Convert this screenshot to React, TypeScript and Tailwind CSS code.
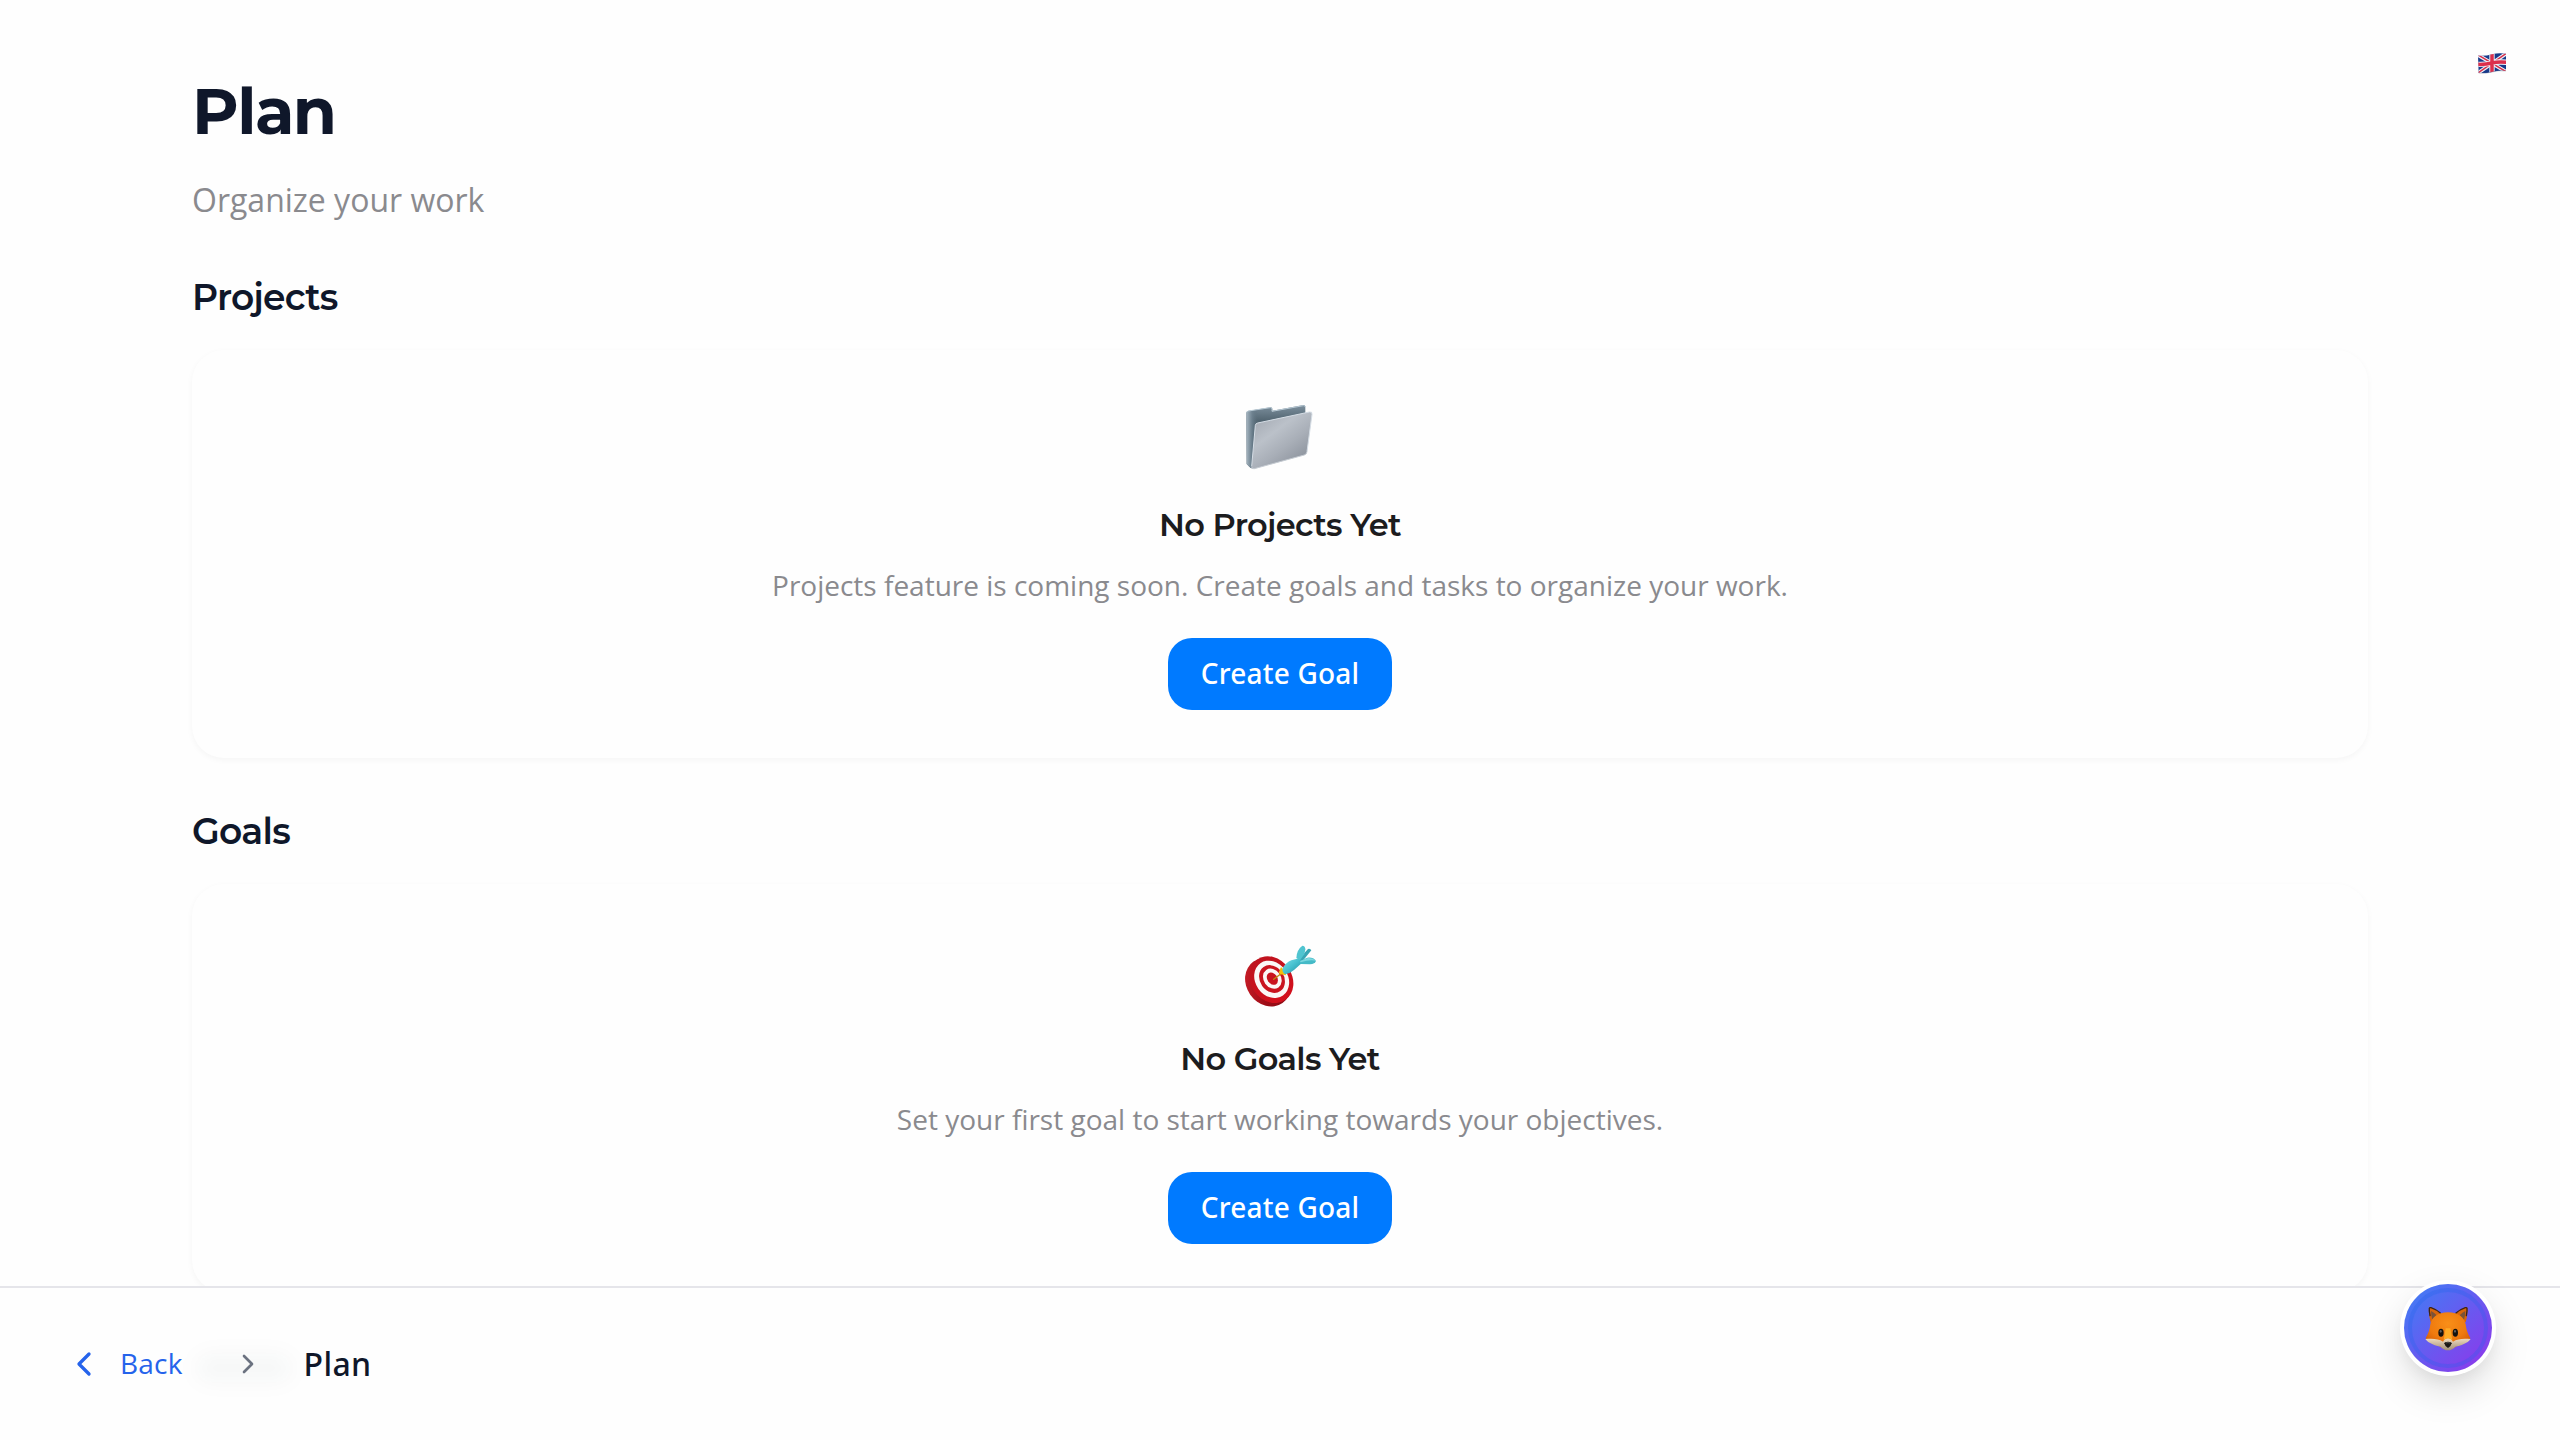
import React from "react";
import { ChevronLeft, ChevronRight } from "lucide-react";

function FolderIcon() {
  return (
    <svg viewBox="120 60 240 216" className="h-18 w-20 overflow-visible" aria-hidden="true">
      <defs>
        <linearGradient id="folderBack" x1="0" y1="0" x2="0" y2="1">
          <stop offset="0" stopColor="#7d909e" />
          <stop offset="0.25" stopColor="#526571" />
          <stop offset="1" stopColor="#42525f" />
        </linearGradient>
        <linearGradient id="folderSide" x1="0" y1="0" x2="1" y2="0">
          <stop offset="0" stopColor="#a9b8c3" />
          <stop offset="0.1" stopColor="#708492" stopOpacity="0.8" />
          <stop offset="0.2" stopColor="#5d717f" stopOpacity="0" />
        </linearGradient>
        <linearGradient id="folderFront" x1="0.1" y1="0" x2="0.9" y2="1">
          <stop offset="0" stopColor="#a1a7b0" />
          <stop offset="0.35" stopColor="#bbc1c9" />
          <stop offset="0.6" stopColor="#a8aeb7" />
          <stop offset="1" stopColor="#828993" />
        </linearGradient>
      </defs>
      <path d="M139 99q0-5 5-6l67-11q6-1 6 5v5l93-17q6-1 6 5v130l-157 54q-5 2-11-4l-8-8z" fill="url(#folderBack)" />
      <path d="M139 99q0-5 5-6l67-11q6-1 6 5v5l93-17q6-1 6 5v130l-157 54q-5 2-11-4l-8-8z" fill="url(#folderSide)" />
      <path d="M141 97q1-3 4-4l66-10q5-1 5 5v6l94-17q5-1 6 4" fill="none" stroke="#b9cad5" strokeWidth="3" />
      <path d="M166 136q1-6 7-7l155-33q9-2 8 7l-15 112q-1 8-8 10l-150 41q-9 2-8-6z" fill="url(#folderFront)" />
      <path d="M155 259l11-123q1-6 7-7l155-33q9-2 8 7l-15 112" fill="none" stroke="#d5dde5" strokeWidth="3" />
      <path d="M321 215q-1 8-8 10l-150 41q-8 2-8-6" fill="none" stroke="#c5cbd2" strokeWidth="3" />
    </svg>
  );
}

function TargetIcon() {
  return (
    <svg viewBox="60 12 240 216" className="h-18 w-20 overflow-visible" aria-hidden="true">
      <defs>
        <linearGradient id="targetRim" x1="0" y1="0" x2="1" y2="1">
          <stop offset="0" stopColor="#d3212b" />
          <stop offset="0.5" stopColor="#9e0d17" />
          <stop offset="1" stopColor="#7c0a12" />
        </linearGradient>
        <linearGradient id="targetFace" x1="0" y1="0" x2="0" y2="1">
          <stop offset="0" stopColor="#bf131e" />
          <stop offset="1" stopColor="#d3101c" />
        </linearGradient>
        <linearGradient id="dartBody" x1="0" y1="0" x2="1" y2="1">
          <stop offset="0" stopColor="#7fe0e8" />
          <stop offset="0.5" stopColor="#45bfce" />
          <stop offset="1" stopColor="#258b9c" />
        </linearGradient>
      </defs>
      <ellipse cx="144" cy="157" rx="65" ry="76" transform="rotate(-35 144 157)" fill="url(#targetRim)" />
      <ellipse cx="154" cy="149" rx="62" ry="74" transform="rotate(-35 154 149)" fill="url(#targetFace)" />
      <ellipse cx="155" cy="148" rx="49" ry="59" transform="rotate(-35 155 148)" fill="#fbf7f6" />
      <ellipse cx="156" cy="147" rx="36" ry="44" transform="rotate(-35 156 147)" fill="#c9141f" />
      <ellipse cx="157" cy="146" rx="26" ry="32" transform="rotate(-35 157 146)" fill="#fbf7f6" />
      <ellipse cx="157" cy="146" rx="15" ry="20" transform="rotate(-35 157 146)" fill="#c9141f" />
      <path d="M161 148l26-20" stroke="#c08a12" strokeWidth="4" strokeLinecap="round" />
      <path d="M183 111l16 17-2 8-15-3-6-5z" fill="#f2bd0c" />
      <path d="M188 115q10-18 26-24l24-6q10 6 5 16l-20 18q-12 11-28 14-10-7-7-18z" fill="url(#dartBody)" />
      <path d="M236 88l28-31q7-2 10 4l-28 34z" fill="#37a5b4" />
      <path d="M229 84q1-25 18-37 9 1 9 11l-3 15-13 18z" fill="#4fc4d0" />
      <path d="M238 94l24-11q18-2 26 10-3 9-18 10l-28-1z" fill="#45bac7" />
      <path d="M240 93l24-9q15-1 23 8-18-4-45 5z" fill="#7bd8df" />
    </svg>
  );
}

function FlagIcon() {
  return (
    <svg viewBox="0 0 84 63" className="h-[21px] w-7 overflow-visible" aria-label="English">
      <defs>
        <clipPath id="flagShape">
          <path d="M0 8Q22 10 42 4T84 2V54Q62 52 42 57T2 60Z" />
        </clipPath>
      </defs>
      <g clipPath="url(#flagShape)">
        <path d="M0 0h84v63H0z" fill="#173a8a" />
        <path d="M0 6L84 56M84 2L0 60" stroke="#eef1f8" strokeWidth="11" />
        <path d="M0 6L84 56M84 2L0 60" stroke="#d6304a" strokeWidth="4.5" />
        <path d="M42 0v63M0 34Q22 35 42 30T86 28" fill="none" stroke="#eef1f8" strokeWidth="16" />
        <path d="M42 0v63M0 34Q22 35 42 30T86 28" fill="none" stroke="#dc2f4c" strokeWidth="10.5" />
      </g>
      <path d="M2 60Q22 63 42 57T84 54" fill="none" stroke="#6f7690" strokeOpacity="0.5" strokeWidth="2" />
    </svg>
  );
}

function FoxIcon() {
  return (
    <svg viewBox="192 162 144 138" className="h-[46px] w-12" aria-hidden="true">
      <defs>
        <radialGradient id="foxHead" cx="0.5" cy="0.3" r="0.7">
          <stop offset="0" stopColor="#f98f18" />
          <stop offset="0.6" stopColor="#ef7a0e" />
          <stop offset="1" stopColor="#cf5806" />
        </radialGradient>
        <linearGradient id="foxMuzzle" x1="0" y1="0" x2="0" y2="1">
          <stop offset="0" stopColor="#f0dcc0" />
          <stop offset="1" stopColor="#a08e78" />
        </linearGradient>
      </defs>
      <path d="M212 214q-7-26-5-43 1-4 6-2 19 7 32 21l-14 22z" fill="#d9650a" />
      <path d="M317 214q7-26 5-43-1-4-6-2-19 7-32 21l14 22z" fill="#d9650a" />
      <path d="M210 194q-3-15-2-22 1-3 5-2 17 6 28 16" fill="none" stroke="#3a2418" strokeWidth="4" strokeLinecap="round" />
      <path d="M319 194q3-15 2-22-1-3-5-2-17 6-28 16" fill="none" stroke="#3a2418" strokeWidth="4" strokeLinecap="round" />
      <path d="M217 207q-4-15-4-27 9 4 17 13zM312 207q4-15 4-27-9 4-17 13z" fill="#7a5238" />
      <path d="M264 184c31 0 49 16 53 36 2 17 6 28 14 41-8 14-30 21-45 26-6 5-13 9-22 9s-16-4-22-9c-15-5-37-12-45-26 8-13 12-24 14-41 4-20 22-36 53-36z" fill="url(#foxHead)" />
      <path d="M196 264c18-2 40-2 53 8 5-7 9-10 15-10s10 3 15 10c13-10 35-10 53-8-9 13-30 20-46 23-6 6-13 11-22 11s-16-5-22-11c-16-3-37-10-46-23z" fill="url(#foxMuzzle)" />
      <path d="M257 232h14l6 36q-6-6-13-6t-13 6z" fill="#ffab24" />
      <ellipse cx="243" cy="245" rx="8" ry="12" fill="#16130f" />
      <ellipse cx="286" cy="245" rx="8" ry="12" fill="#16130f" />
      <ellipse cx="242" cy="241" rx="3" ry="4" fill="#5f6062" />
      <ellipse cx="285" cy="241" rx="3" ry="4" fill="#5f6062" />
      <path d="M253 277q0-5 11-5t11 5q-1 8-11 14-10-6-11-14z" fill="#1a1715" />
      <path d="M258 276q6-3 12 0" stroke="#6b6865" strokeWidth="2" fill="none" />
    </svg>
  );
}

type SectionProps = {
  heading: string;
  icon: React.ReactNode;
  title: string;
  description: string;
};

function Section({ heading, icon, title, description }: SectionProps) {
  return (
    <section>
      <h2 className="font-['Montserrat','Inter',sans-serif] text-4xl leading-[44px] font-semibold tracking-[-0.02em] text-[#0f172a]">
        {heading}
      </h2>
      <div className="mt-[31px] flex h-[408px] flex-col items-center rounded-[32px] bg-[#fefefe] pt-[50px] shadow-[0_2px_6px_rgba(0,0,0,0.04)]">
        {icon}
        <h3 className="mt-[33px] font-['Montserrat','Inter',sans-serif] text-[32px] leading-10 font-semibold tracking-[-0.02em] text-[#1c1c1e]">
          {title}
        </h3>
        <p className="mt-5 text-[28px] leading-10 text-[#8a8a8e]">{description}</p>
        <button className="mt-[33px] h-18 w-56 rounded-3xl bg-[#007aff] pb-0.5 font-['Noto_Sans',sans-serif] text-[28px] font-medium tracking-[0.2px] text-white">
          Create Goal
        </button>
      </div>
    </section>
  );
}

export default function App() {
  return (
    <div className="relative flex h-[1440px] w-[2560px] flex-col overflow-hidden bg-[#fefefe] font-['Open_Sans','Noto_Sans',sans-serif]">
      <main className="mx-auto min-h-0 w-[2176px] flex-1 overflow-visible pt-[71px]">
        <h1 className="font-['Montserrat','Inter',sans-serif] text-[64px] leading-20 font-bold tracking-[-0.025em] text-[#0f172a]">
          Plan
        </h1>
        <p className="mt-[27px] text-[32px] leading-11 text-[#8a8a8e]">Organize your work</p>
        <div className="mt-[53px] flex flex-col gap-[51px]">
          <Section
            heading="Projects"
            icon={<FolderIcon />}
            title="No Projects Yet"
            description="Projects feature is coming soon. Create goals and tasks to organize your work."
          />
          <Section
            heading="Goals"
            icon={<TargetIcon />}
            title="No Goals Yet"
            description="Set your first goal to start working towards your objectives."
          />
        </div>
      </main>

      <footer className="relative flex h-[154px] shrink-0 items-center border-t-2 border-[#e5e5ea] bg-[#fefefe] pl-16">
        <div className="absolute top-[66px] left-[196px] h-7 w-[96px] rounded-full bg-[#0f172a]/3 blur-[10px]" />
        <a className="relative flex items-center gap-4 text-[28px] leading-10 text-[#2563eb]">
          <ChevronLeft size={40} strokeWidth={2} />
          <span className="-mt-0.5 tracking-[0.2px]">Back</span>
        </a>
        <ChevronRight size={32} strokeWidth={2} className="relative ml-[49px] text-[#6b7280]" />
        <span className="relative -mt-px ml-10 font-['Noto_Sans',sans-serif] text-[32px] font-medium tracking-[0.35px] text-[#0f172a]">
          Plan
        </span>
      </footer>

      <button className="absolute top-[53px] left-[2478px]">
        <FlagIcon />
      </button>

      <button className="absolute top-[1284px] left-[2404px] flex size-22 items-center justify-center rounded-full bg-[linear-gradient(135deg,#3b82f6,#9333ea)] shadow-[0_0_0_4px_#fff,0_16px_40px_rgba(0,0,0,0.15),0_8px_16px_rgba(0,0,0,0.05)]">
        <span className="absolute inset-1 rounded-full border-4 border-[#2563eb]/30" />
        <FoxIcon />
      </button>
    </div>
  );
}
